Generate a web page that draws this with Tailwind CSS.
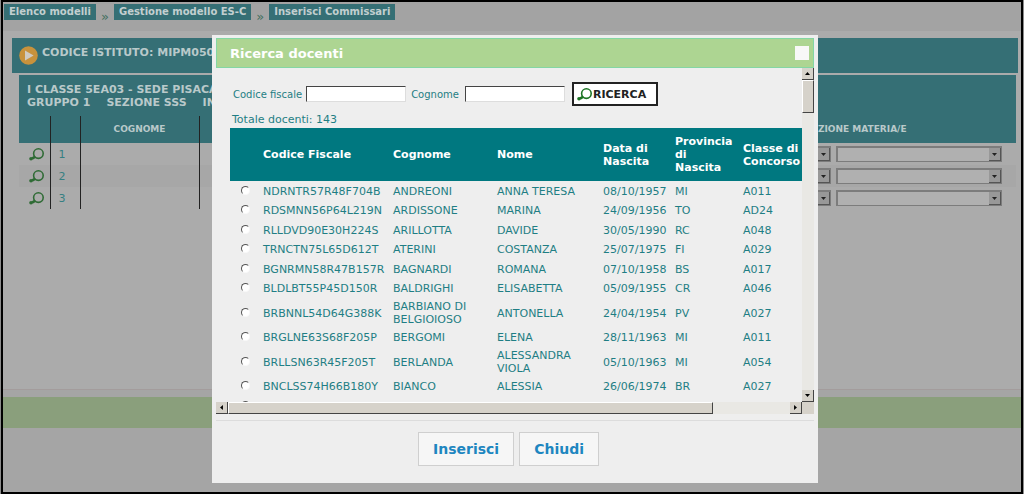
<!DOCTYPE html>
<html lang="it">
<head>
<meta charset="utf-8">
<title>Ricerca docenti</title>
<script src="https://cdn.jsdelivr.net/npm/@tailwindcss/browser@4"></script>
</head>
<body class="bg-[#8c8c8c] font-['DejaVu_Sans',Verdana,sans-serif] text-[11px] leading-[13px]">
<svg class="hidden" aria-hidden="true">
  <symbol id="lens" viewBox="0 0 15 13">
    <circle cx="9.4" cy="5.6" r="4.8" fill="none" stroke="currentColor" stroke-width="1.6"/>
    <path d="M6.4 8.6L3 10.6" stroke="currentColor" stroke-width="2.6"/>
    <circle cx="2" cy="10.8" r="1.8" fill="currentColor"/>
  </symbol>
  <symbol id="down" viewBox="0 0 7 4"><path d="M0 0h7L3.5 4z" fill="currentColor"/></symbol>
</svg>

<div class="mx-px flex min-h-screen flex-col border-2 border-black bg-[#a5a5a5]">
  <nav class="flex h-[29px] items-start gap-[5px] bg-[#a3a3a3] pt-[2px] pl-px text-[10px] font-bold text-[#c3cfd0]" aria-label="Percorso">
    <a href="#" class="bg-[#356f75] px-[5px] py-px pb-[2px]">Elenco modelli</a>
    <span class="pt-[6px] text-[13px] font-normal text-[#446f60]">»</span>
    <a href="#" class="bg-[#356f75] px-[5px] py-px pb-[2px]">Gestione modello ES-C</a>
    <span class="pt-[6px] text-[13px] font-normal text-[#446f60]">»</span>
    <a href="#" class="bg-[#356f75] px-[5px] py-px pb-[2px]">Inserisci Commissari</a>
  </nav>

  <main class="h-[358px] bg-[#ababab] pt-[7px] pr-[3px] pl-[9px]">
    <div class="flex h-[35px] items-start gap-1 bg-[#356f75] pt-2 pl-[7px] font-bold text-[#b9c9ca]">
      <svg class="size-[19px]" viewBox="0 0 19 19"><circle cx="9.5" cy="9.5" r="9.3" fill="#c8923c"/><path d="M6 4.4L14.6 9.5L6 14.6z" fill="#cfcac2"/></svg>
      <h1>CODICE ISTITUTO: MIPM050</h1>
    </div>
    <section class="mt-[2px] mr-[2px] ml-[7px]">
      <div class="h-[41px] bg-[#356f75] pt-2 pl-2 font-bold text-[#b9c9ca]">
        <p>I CLASSE 5EA03 - SEDE PISACA</p>
        <p class="flex gap-4"><span>GRUPPO 1</span><span>SEZIONE SSS</span><span>IN</span></p>
      </div>
      <table class="w-full table-fixed border-collapse">
        <colgroup><col class="w-[31px]"><col class="w-[30px]"><col class="w-[119px]"><col><col class="w-[200px]"></colgroup>
        <thead>
          <tr class="h-[27px] bg-[#356f75] text-[9px] text-[#b9c9ca]">
            <td class="border-r border-[#222]"></td><td class="border-r border-[#222]"></td>
            <th class="border-r border-[#222]">COGNOME</th><td></td><th class="pl-[2px] text-left">ZIONE MATERIA/E</th>
          </tr>
        </thead>
        <tbody class="text-[#357f82]" id="commissari"></tbody>
      </table>
    </section>
  </main>
  <footer class="border-t border-[#a39c9c] pt-[7px]"><div class="h-[31px] bg-[#8a9f7c]"></div></footer>
</div>

<div class="fixed inset-0 flex items-start justify-center pt-[35px] pl-[6px]">
  <div role="dialog" aria-labelledby="titolo" class="w-full max-w-[606px] bg-[#eeeeee] px-1 pt-[3px] pb-[17px]">
    <header class="flex h-[30px] items-center justify-between border border-[#84d6a4] bg-[#add592] pr-1 pl-[13px] text-white">
      <h2 id="titolo" class="text-[13px] font-bold">Ricerca docenti</h2>
      <button type="button" aria-label="Chiudi finestra" class="size-[14px] bg-[#f8f8f8]"></button>
    </header>
    <div class="grid h-[346px] grid-cols-[minmax(0,1fr)_12px] grid-rows-[minmax(0,1fr)_12px]">
      <div class="overflow-hidden pt-[14px] pl-[14px] text-[#1f7e84]">
        <form class="flex items-center pl-[3px] text-[10px]">
          <label for="cf">Codice fiscale</label>
          <input id="cf" class="ml-1 h-4 w-[100px] border-t border-l border-r border-b border-t-[#444] border-l-[#444] border-r-[#ddd] border-b-[#ddd] bg-white">
          <label for="cog" class="ml-[5px]">Cognome</label>
          <input id="cog" class="ml-[6px] h-4 w-[100px] border-t border-l border-r border-b border-t-[#444] border-l-[#444] border-r-[#ddd] border-b-[#ddd] bg-white">
          <button type="button" class="ml-[7px] flex h-6 w-[86px] items-center gap-px border-2 border-[#222] bg-white pl-[3px] text-[11px] font-bold text-[#222]"><svg class="h-[13px] w-[15px] text-[#1c7424]"><use href="#lens"/></svg>RICERCA</button>
        </form>
        <p class="mt-[7px] pl-[2px]">Totale docenti: 143</p>
        <table class="mt-[2px] w-[700px] table-fixed border-collapse">
          <colgroup><col class="w-[31px]"><col class="w-[130px]"><col class="w-[104px]"><col class="w-[106px]"><col class="w-[72px]"><col class="w-[68px]"><col></colgroup>
          <thead>
            <tr class="h-[53px] bg-[#007880] text-left text-white">
              <td></td><th class="px-[2px]">Codice Fiscale</th><th class="px-[2px]">Cognome</th><th class="px-[2px]">Nome</th><th class="px-[2px]">Data di<br>Nascita</th><th class="px-[2px]">Provincia<br>di<br>Nascita</th><th class="px-[2px]">Classe di<br>Concorso</th>
            </tr>
          </thead>
          <tbody id="docenti"></tbody>
        </table>
      </div>
      <div class="flex flex-col justify-between bg-[#e9e8e4]">
        <div>
          <button type="button" aria-label="Su" class="flex h-3 w-full items-center justify-center border-r border-b border-[#444] bg-[#d6d2ca] text-black"><svg class="h-[3px] w-[5px] rotate-180"><use href="#down"/></svg></button>
          <div class="h-[33px] border border-t-white border-r-[#444] border-b-[#444] border-l-white bg-[#d6d2ca]"></div>
        </div>
        <button type="button" aria-label="Giù" class="flex h-3 w-full items-center justify-center border-r border-b border-[#444] bg-[#d6d2ca] text-black"><svg class="h-[3px] w-[5px]"><use href="#down"/></svg></button>
      </div>
      <div class="flex justify-between bg-[#e9e8e4]">
        <div class="flex">
          <button type="button" aria-label="Sinistra" class="flex h-3 w-3 items-center justify-center border-r border-b border-[#444] bg-[#d6d2ca] text-black"><svg class="h-[3px] w-[5px] rotate-90"><use href="#down"/></svg></button>
          <div class="h-3 w-[485px] border border-t-white border-r-[#444] border-b-[#444] border-l-white bg-[#d6d2ca]"></div>
        </div>
        <button type="button" aria-label="Destra" class="flex h-3 w-3 items-center justify-center border-r border-b border-[#444] bg-[#d6d2ca] text-black"><svg class="h-[3px] w-[5px] -rotate-90"><use href="#down"/></svg></button>
      </div>
      <div class="bg-[#d6d2ca]"></div>
    </div>
    <div class="mt-[6px] flex justify-center gap-[5px] border-t border-[#dcdcdc] pt-[11px] pr-[13px] text-sm font-bold text-[#1e86c0]">
      <button type="button" class="h-[34px] border border-[#cfcfcf] bg-[#f6f6f6] px-[14px]">Inserisci</button>
      <button type="button" class="h-[34px] border border-[#cfcfcf] bg-[#f6f6f6] px-[14px]">Chiudi</button>
    </div>
  </div>
</div>

<script>
const docenti = [
  ["NDRNTR57R48F704B","ANDREONI","ANNA TERESA","08/10/1957","MI","A011"],
  ["RDSMNN56P64L219N","ARDISSONE","MARINA","24/09/1956","TO","AD24"],
  ["RLLDVD90E30H224S","ARILLOTTA","DAVIDE","30/05/1990","RC","A048"],
  ["TRNCTN75L65D612T","ATERINI","COSTANZA","25/07/1975","FI","A029"],
  ["BGNRMN58R47B157R","BAGNARDI","ROMANA","07/10/1958","BS","A017"],
  ["BLDLBT55P45D150R","BALDRIGHI","ELISABETTA","05/09/1955","CR","A046"],
  ["BRBNNL54D64G388K","BARBIANO DI<br>BELGIOIOSO","ANTONELLA","24/04/1954","PV","A027"],
  ["BRGLNE63S68F205P","BERGOMI","ELENA","28/11/1963","MI","A011"],
  ["BRLLSN63R45F205T","BERLANDA","ALESSANDRA<br>VIOLA","05/10/1963","MI","A054"],
  ["BNCLSS74H66B180Y","BIANCO","ALESSIA","26/06/1974","BR","A027"],
  ["","","","","",""]
];
document.getElementById("docenti").innerHTML = docenti.map(r =>
  `<tr class="odd:h-5 even:h-[19px]"><td class="pl-[11px]"><input type="radio" name="docente" aria-label="Seleziona ${r[1].replace("<br>", " ")}" class="mb-[2px] block size-[9px] appearance-none rounded-full border border-t-[#555] border-r-[#f8f8f8] border-b-[#f8f8f8] border-l-[#555] bg-white"></td>` +
  r.map(c => `<td class="px-[2px] py-[2px]">${c}</td>`).join("") + "</tr>").join("");

const tendina = (w, n) => `<span class="relative block ${w}"><select aria-label="${n}" class="block h-4 w-full appearance-none border-t-2 border-r border-b border-l-2 border-[#7c7c7c] bg-[#b0b0b0]"></select><span class="pointer-events-none absolute top-[2px] right-px flex h-[13px] w-3 items-center justify-center border-r border-b border-[#555] bg-[#989898] text-[#222]"><svg class="h-[3px] w-[5px]"><use href="#down"/></svg></span></span>`;
document.getElementById("commissari").innerHTML = [1, 2, 3].map(n =>
  `<tr class="h-[22px] even:bg-[#a7a7a7]"><td class="border-r border-[#222] pl-[10px]"><button type="button" aria-label="Cerca commissario ${n}" class="block text-[#2f6b35]"><svg class="h-[13px] w-[15px]"><use href="#lens"/></svg></button></td><td class="border-r border-[#222] pl-2">${n}</td><td class="border-r border-[#222]"></td><td></td><td><div class="flex justify-end gap-[5px] pr-[14px]">${tendina("w-[110px] shrink-0", "Materia " + n)}${tendina("w-[166px] shrink-0", "Nomina " + n)}</div></td></tr>`).join("");
</script>
</body>
</html>
